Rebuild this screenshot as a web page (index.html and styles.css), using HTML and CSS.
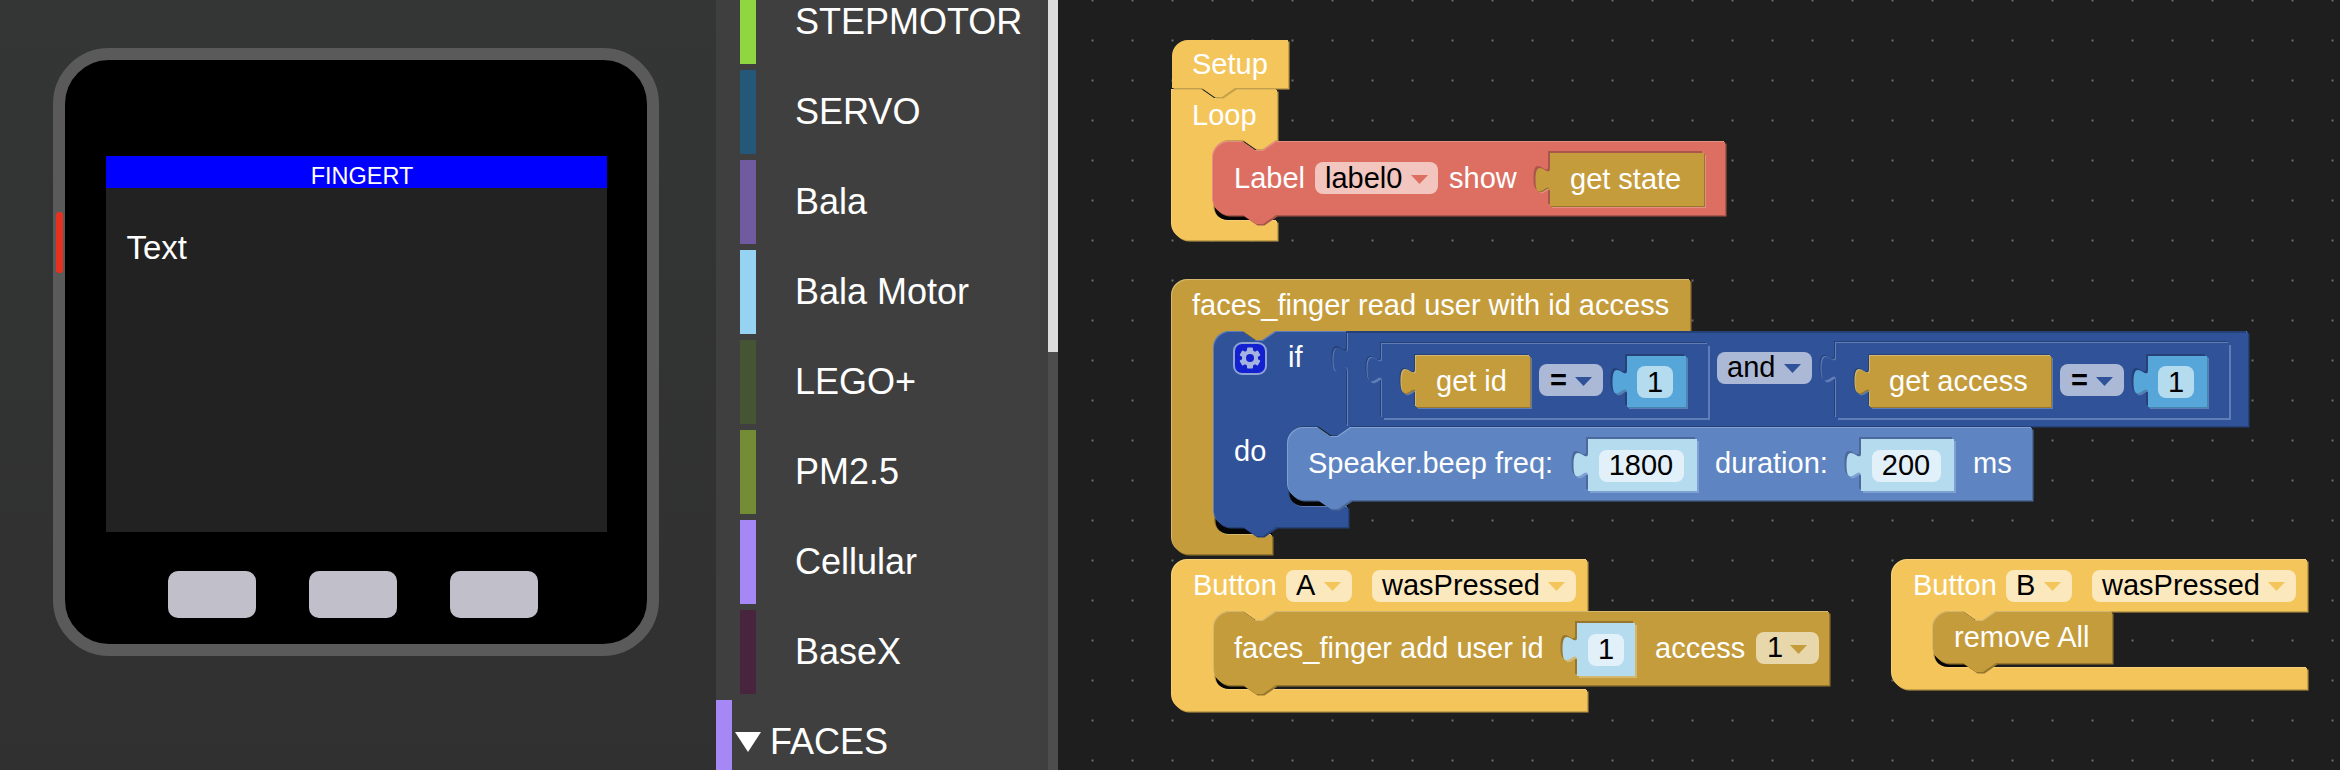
FILE: index.html
```html
<!DOCTYPE html>
<html>
<head>
<meta charset="utf-8">
<title>UIFlow</title>
<link rel="stylesheet" href="styles.css">
</head>
<body>
<div class="app">

  <div class="preview">
    <div class="device">
      <span class="side-led"></span>
      <div class="screen">
        <div class="title-bar">FINGERT</div>
        <div class="screen-text">Text</div>
      </div>
      <div class="buttons">
        <span class="btn"></span>
        <span class="btn"></span>
        <span class="btn"></span>
      </div>
    </div>
  </div>

  <div class="toolbox">
    <div class="cat-list">
      <div class="cat"><span class="swatch sw-step"></span><span class="cat-name">STEPMOTOR</span></div>
      <div class="cat"><span class="swatch sw-servo"></span><span class="cat-name">SERVO</span></div>
      <div class="cat"><span class="swatch sw-bala"></span><span class="cat-name">Bala</span></div>
      <div class="cat"><span class="swatch sw-motor"></span><span class="cat-name">Bala Motor</span></div>
      <div class="cat"><span class="swatch sw-lego"></span><span class="cat-name">LEGO+</span></div>
      <div class="cat"><span class="swatch sw-pm"></span><span class="cat-name">PM2.5</span></div>
      <div class="cat"><span class="swatch sw-cell"></span><span class="cat-name">Cellular</span></div>
      <div class="cat"><span class="swatch sw-base"></span><span class="cat-name">BaseX</span></div>
      <div class="group">
        <span class="swatch sw-faces"></span>
        <span class="caret"></span>
        <span class="group-name">FACES</span>
      </div>
    </div>
    <div class="scroll"><div class="scroll-thumb"></div></div>
  </div>

  <div class="workspace">
    <svg class="blocks" width="1282" height="770" viewBox="1058 0 1282 770">
      <defs>
        <path id="b-setup" d="M1172,56 a16,16 0 0 1 16,-16 H1288 V88 H1235 l-13,9 h-7 l-13,-9 H1172 Z"/>
        <path id="b-loop" d="M1172,90 H1202 l13,9 h7 l13,-9 H1277 V140 H1276 l-13,9 h-7 l-13,-9 H1229 a16,16 0 0 0 -16,16 V205 a16,16 0 0 0 16,16 H1277 V240 H1188 a16,16 0 0 1 -16,-16 Z"/>
        <path id="b-label" d="M1213,158 a16,16 0 0 1 16,-16 H1243 l13,9 h7 l13,-9 H1725 V215 H1276 l-13,9 h-7 l-13,-9 H1229 a16,16 0 0 1 -16,-16 Z"/>
        <path id="b-getstate" d="M1550,153 v12 v3 c0,12 -14.5,-14 -14.5,12 s14.5,-3 14.5,12 V206 H1704 V153 Z"/>
        <path id="b-read" d="M1172,296 a16,16 0 0 1 16,-16 H1690 V331 H1276 l-13,9 h-7 l-13,-9 H1230 a16,16 0 0 0 -16,16 V519 a16,16 0 0 0 16,16 H1272 V554 H1188 a16,16 0 0 1 -16,-16 Z"/>
        <path id="b-if" d="M1214,348 a16,16 0 0 1 16,-16 H1243 l13,9 h7 l13,-9 H2248 V426 H1351 l-13,9 h-7 l-13,-9 H1304 a16,16 0 0 0 -16,16 V491 a16,16 0 0 0 16,16 H1348 V527 H1276 l-13,9 h-7 l-13,-9 H1230 a16,16 0 0 1 -16,-16 Z"/>
        <path id="b-and" d="M1348,333 v12 v3 c0,12 -14.5,-14 -14.5,12 s14.5,-3 14.5,12 V426 H2248 V333 Z"/>
        <path id="b-eq1" d="M1382,344 v11 v3 c0,12 -14.5,-14 -14.5,12 s14.5,-3 14.5,12 V418 H1708 V344 Z"/>
        <path id="b-eq2" d="M1836,343 v11 v3 c0,12 -14.5,-14 -14.5,12 s14.5,-3 14.5,12 V418 H2229 V343 Z"/>
        <path id="b-getid" d="M1416,356 v11 v3 c0,12 -14.5,-14 -14.5,12 s14.5,-3 14.5,12 V407 H1530 V356 Z"/>
        <path id="b-num1" d="M1627,356 v11 v3 c0,12 -14.5,-14 -14.5,12 s14.5,-3 14.5,12 V407 H1686 V356 Z"/>
        <path id="b-getaccess" d="M1870,356 v11 v3 c0,12 -14.5,-14 -14.5,12 s14.5,-3 14.5,12 V407 H2051 V356 Z"/>
        <path id="b-num2" d="M2148,356 v11 v3 c0,12 -14.5,-14 -14.5,12 s14.5,-3 14.5,12 V407 H2207 V356 Z"/>
        <path id="b-speak" d="M1288,444 a16,16 0 0 1 16,-16 H1318 l13,9 h7 l13,-9 H2032 V500 H1351 l-13,9 h-7 l-13,-9 H1304 a16,16 0 0 1 -16,-16 Z"/>
        <path id="b-freq" d="M1588,439 v11 v3 c0,12 -14.5,-14 -14.5,12 s14.5,-3 14.5,12 V491 H1697 V439 Z"/>
        <path id="b-dur" d="M1861,439 v11 v3 c0,12 -14.5,-14 -14.5,12 s14.5,-3 14.5,12 V491 H1954 V439 Z"/>
        <path id="b-btna" d="M1172,576 a16,16 0 0 1 16,-16 H1587 V611 H1276 l-13,9 h-7 l-13,-9 H1230 a16,16 0 0 0 -16,16 V674 a16,16 0 0 0 16,16 H1587 V711 H1188 a16,16 0 0 1 -16,-16 Z"/>
        <path id="b-add" d="M1214,628 a16,16 0 0 1 16,-16 H1243 l13,9 h7 l13,-9 H1829 V685 H1276 l-13,9 h-7 l-13,-9 H1230 a16,16 0 0 1 -16,-16 Z"/>
        <path id="b-uid" d="M1577,623 v11 v3 c0,12 -14.5,-14 -14.5,12 s14.5,-3 14.5,12 V676 H1635 V623 Z"/>
        <path id="b-btnb" d="M1892,576 a16,16 0 0 1 16,-16 H2307 V611 H1996 l-13,9 h-7 l-13,-9 H1949 a16,16 0 0 0 -16,16 V652 a16,16 0 0 0 16,16 H2307 V689 H1908 a16,16 0 0 1 -16,-16 Z"/>
        <path id="b-remove" d="M1933,628 a16,16 0 0 1 16,-16 H1963 l13,9 h7 l13,-9 H2112 V663 H1996 l-13,9 h-7 l-13,-9 H1949 a16,16 0 0 1 -16,-16 Z"/>
      </defs>

      <!-- setup / loop -->
      <rect class="void" x="1213" y="190" width="60" height="32"/>
      <g class="yel">
        <use href="#b-loop" class="hi" x="-1" y="-1"/><use href="#b-loop" class="lo" x="1.5" y="1.5"/><use href="#b-loop" class="fl"/>
        <use href="#b-setup" class="lo" x="1.5" y="1.5"/><use href="#b-setup" class="fl"/>
        <text class="t" x="1192" y="74">Setup</text>
        <text class="t" x="1192" y="125">Loop</text>
      </g>
      <g class="red">
        <use href="#b-label" class="hi" x="-1" y="-1"/><use href="#b-label" class="lo" x="1.5" y="1.5"/><use href="#b-label" class="fl"/>
        <text class="t" x="1234" y="188">Label</text>
        <rect class="dd" x="1315" y="162" width="123" height="32" rx="8"/>
        <text class="k" x="1325" y="188">label0</text>
        <polygon class="arrow" points="1411,175 1428,175 1419.5,184"/>
        <text class="t" x="1449" y="188">show</text>
        <use href="#b-getstate" class="lo" x="-2" y="-2"/><use href="#b-getstate" class="hi" x="2" y="2"/>
        <g class="gold">
          <use href="#b-getstate" class="lo" x="1" y="1"/><use href="#b-getstate" class="fl"/>
          <text class="t" x="1570" y="189">get state</text>
        </g>
      </g>

      <!-- fingerprint read event -->
      <rect class="void" x="1214" y="505" width="58" height="31"/>
      <g class="gold">
        <use href="#b-read" class="hi" x="-1" y="-1"/><use href="#b-read" class="lo" x="1.5" y="1.5"/><use href="#b-read" class="fl"/>
        <text class="t" x="1192" y="315">faces_finger read user with id access</text>
      </g>
      <rect class="void" x="1288" y="480" width="60" height="28"/>
      <g class="navy">
        <use href="#b-if" class="hi" x="-1" y="-1"/><use href="#b-if" class="lo" x="1.5" y="1.5"/><use href="#b-if" class="fl"/>
        <rect class="gear-box" x="1234" y="343" width="32" height="31" rx="8"/>
        <g class="gear">
          <rect x="1247" y="347.5" width="6" height="21" rx="1"/>
          <rect x="1247" y="347.5" width="6" height="21" rx="1" transform="rotate(60 1250 358)"/>
          <rect x="1247" y="347.5" width="6" height="21" rx="1" transform="rotate(120 1250 358)"/>
          <circle cx="1250" cy="358" r="8"/>
        </g>
        <circle class="gear-hole" cx="1250" cy="358" r="4"/>
        <text class="t" x="1288" y="367">if</text>
        <text class="t" x="1234" y="461">do</text>

        <use href="#b-and" class="lo" x="-2" y="-2"/><use href="#b-and" class="hi" x="-1" y="0"/><use href="#b-and" class="fl"/>

        <use href="#b-eq1" class="lo" x="-2" y="-2"/><use href="#b-eq1" class="hi" x="2" y="2"/><use href="#b-eq1" class="hi" x="-1" y="-1"/><use href="#b-eq1" class="fl"/>
        <use href="#b-getid" class="lo" x="-2" y="-2"/><use href="#b-getid" class="hi" x="2" y="2"/>
        <g class="gold">
          <use href="#b-getid" class="hi" x="-1" y="-1"/><use href="#b-getid" class="lo" x="1" y="1"/><use href="#b-getid" class="fl"/>
          <text class="t" x="1436" y="391">get id</text>
        </g>
        <rect class="dd" x="1539" y="364" width="64" height="32" rx="8"/>
        <text class="k bold" x="1550" y="390">=</text>
        <polygon class="arrow" points="1575,377 1592,377 1583.5,386"/>
        <use href="#b-num1" class="lo" x="-2" y="-2"/><use href="#b-num1" class="hi" x="2" y="2"/>
        <g class="sky">
          <use href="#b-num1" class="lo" x="1" y="1"/><use href="#b-num1" class="fl"/>
          <rect class="field" x="1637" y="366" width="36" height="32" rx="8"/>
          <text class="k mid" x="1655" y="392">1</text>
        </g>

        <rect class="dd" x="1717" y="352" width="95" height="32" rx="8"/>
        <text class="k" x="1727" y="377">and</text>
        <polygon class="arrow" points="1784,364 1801,364 1792.5,373"/>

        <use href="#b-eq2" class="lo" x="-2" y="-2"/><use href="#b-eq2" class="hi" x="2" y="2"/><use href="#b-eq2" class="hi" x="-1" y="-1"/><use href="#b-eq2" class="fl"/>
        <use href="#b-getaccess" class="lo" x="-2" y="-2"/><use href="#b-getaccess" class="hi" x="2" y="2"/>
        <g class="gold">
          <use href="#b-getaccess" class="hi" x="-1" y="-1"/><use href="#b-getaccess" class="lo" x="1" y="1"/><use href="#b-getaccess" class="fl"/>
          <text class="t" x="1889" y="391">get access</text>
        </g>
        <rect class="dd" x="2060" y="364" width="64" height="32" rx="8"/>
        <text class="k bold" x="2071" y="390">=</text>
        <polygon class="arrow" points="2096,377 2113,377 2104.5,386"/>
        <use href="#b-num2" class="lo" x="-2" y="-2"/><use href="#b-num2" class="hi" x="2" y="2"/>
        <g class="sky">
          <use href="#b-num2" class="lo" x="1" y="1"/><use href="#b-num2" class="fl"/>
          <rect class="field" x="2158" y="366" width="36" height="32" rx="8"/>
          <text class="k mid" x="2176" y="392">1</text>
        </g>
      </g>
      <g class="blue">
        <use href="#b-speak" class="hi" x="-1" y="-1"/><use href="#b-speak" class="lo" x="1.5" y="1.5"/><use href="#b-speak" class="fl"/>
        <text class="t" x="1308" y="473">Speaker.beep freq:</text>
        <use href="#b-freq" class="lo" x="-2" y="-2"/><use href="#b-freq" class="hi" x="2" y="2"/>
        <g class="ice">
          <use href="#b-freq" class="fl"/>
          <rect class="field" x="1599" y="450" width="85" height="32" rx="8"/>
          <text class="k mid" x="1641" y="475">1800</text>
        </g>
        <text class="t" x="1715" y="473">duration:</text>
        <use href="#b-dur" class="lo" x="-2" y="-2"/><use href="#b-dur" class="hi" x="2" y="2"/>
        <g class="ice">
          <use href="#b-dur" class="fl"/>
          <rect class="field" x="1872" y="450" width="69" height="32" rx="8"/>
          <text class="k mid" x="1906" y="475">200</text>
        </g>
        <text class="t" x="1973" y="473">ms</text>
      </g>

      <!-- button A -->
      <rect class="void" x="1214" y="665" width="60" height="26"/>
      <g class="yel">
        <use href="#b-btna" class="hi" x="-1" y="-1"/><use href="#b-btna" class="lo" x="1.5" y="1.5"/><use href="#b-btna" class="fl"/>
        <text class="t" x="1193" y="595">Button</text>
        <rect class="dd" x="1286" y="570" width="66" height="32" rx="8"/>
        <text class="k" x="1296" y="595">A</text>
        <polygon class="arrow" points="1324,582 1341,582 1332.5,591"/>
        <rect class="dd" x="1372" y="570" width="204" height="32" rx="8"/>
        <text class="k" x="1382" y="595">wasPressed</text>
        <polygon class="arrow" points="1548,582 1565,582 1556.5,591"/>
      </g>
      <g class="gold">
        <use href="#b-add" class="hi" x="-1" y="-1"/><use href="#b-add" class="lo" x="1.5" y="1.5"/><use href="#b-add" class="fl"/>
        <text class="t" x="1234" y="658">faces_finger add user id</text>
        <use href="#b-uid" class="lo" x="-2" y="-2"/><use href="#b-uid" class="hi" x="2" y="2"/>
        <g class="ice">
          <use href="#b-uid" class="fl"/>
          <rect class="field" x="1588" y="634" width="36" height="32" rx="8"/>
          <text class="k mid" x="1606" y="659">1</text>
        </g>
        <text class="t" x="1655" y="658">access</text>
        <rect class="dd" x="1756" y="632" width="63" height="32" rx="8"/>
        <text class="k" x="1767" y="657">1</text>
        <polygon class="arrow" points="1790,645 1807,645 1798.5,654"/>
      </g>

      <!-- button B -->
      <rect class="void" x="1933" y="640" width="60" height="29"/>
      <g class="yel">
        <use href="#b-btnb" class="hi" x="-1" y="-1"/><use href="#b-btnb" class="lo" x="1.5" y="1.5"/><use href="#b-btnb" class="fl"/>
        <text class="t" x="1913" y="595">Button</text>
        <rect class="dd" x="2006" y="570" width="66" height="32" rx="8"/>
        <text class="k" x="2016" y="595">B</text>
        <polygon class="arrow" points="2044,582 2061,582 2052.5,591"/>
        <rect class="dd" x="2092" y="570" width="204" height="32" rx="8"/>
        <text class="k" x="2102" y="595">wasPressed</text>
        <polygon class="arrow" points="2268,582 2285,582 2276.5,591"/>
      </g>
      <g class="gold">
        <use href="#b-remove" class="hi" x="-1" y="-1"/><use href="#b-remove" class="lo" x="1.5" y="1.5"/><use href="#b-remove" class="fl"/>
        <text class="t" x="1954" y="647">remove All</text>
      </g>
    </svg>
  </div>

</div>
</body>
</html>
```

FILE: styles.css
```css
html, body { margin:0; padding:0; }
body { background-color:#1e1e1e; font-family:"Liberation Sans", Arial, sans-serif; color:#fff; }
.app { display:flex; width:2340px; height:770px; overflow:hidden; }

/* device preview */
.preview { width:716px; flex:none; box-sizing:border-box; padding:48px 0 0 53px; background:linear-gradient(#343635, #2f302f); }
.device { position:relative; box-sizing:border-box; width:606px; height:608px; padding-top:96px; background:#000; border:12px solid #5a5a5a; border-radius:56px; }
.side-led { position:absolute; left:-9px; top:152px; width:7px; height:61px; border-radius:3px; background:#e8301f; }
.screen { width:501px; height:376px; margin:0 auto; background:#222; }
.title-bar { box-sizing:border-box; height:32px; padding:8px 0 0 12px; line-height:24px; text-align:center; font-size:23.5px; background:#0000ff; }
.screen-text { padding:41px 0 0 21px; font-size:33px; line-height:38px; }
.buttons { display:flex; justify-content:center; gap:53px; margin-top:39px; padding-right:6px; }
.btn { width:88px; height:47px; border-radius:10px; background:#c0bfca; }

/* block categories */
.toolbox { position:relative; width:342px; flex:none; background:#3f3f3f; overflow:hidden; }
.cat-list { margin-top:-20px; }
.cat { display:flex; align-items:center; height:84px; margin:0 0 6px 24px; }
.swatch { flex:none; display:block; width:16px; height:84px; }
.cat-name { margin-left:39px; font-size:36px; line-height:84px; height:84px; }
.group { display:flex; align-items:center; height:84px; }
.caret { width:0; height:0; margin-left:3px; border-left:13px solid transparent; border-right:13px solid transparent; border-top:20px solid #fff; }
.group-name { margin-left:9px; font-size:36px; line-height:84px; height:84px; }
.sw-step { background:#8fd640; }
.sw-servo { background:#245878; }
.sw-bala { background:#705aa0; }
.sw-motor { background:#96d3f3; }
.sw-lego { background:#455432; }
.sw-pm { background:#748c36; }
.sw-cell { background:#a587f5; }
.sw-base { background:#48243f; }
.sw-faces { background:#a587f5; }
.scroll { position:absolute; top:0; right:0; bottom:0; width:10px; background:#4d4d4d; }
.scroll-thumb { height:352px; background:#dcdcdc; }

/* workspace, dots are the blockly grid */
.workspace { flex:1; background-color:#1e1e1e; background-image:radial-gradient(circle, #6a6a6a 1px, transparent 1.4px); background-size:40px 40px; background-position:14.5px -19.5px; }
.blocks { display:block; }
.blocks text { font-family:"Liberation Sans", Arial, sans-serif; font-size:29px; }
.t { fill:#fff; }
.k { fill:#000; }
.bold { font-weight:bold; }
.mid { text-anchor:middle; }
.void { fill:#050505; }
.fl { fill:var(--fl); }
.hi { fill:var(--hi); }
.lo { fill:var(--lo); }
.dd { fill:var(--dd); }
.arrow { fill:var(--fl); }
.field { fill:var(--field); }
.yel { --fl:#f4c55b; --hi:#f6cf78; --lo:#c4a049; --dd:#fbe8bd; }
.red { --fl:#dc6f62; --hi:#e78e83; --lo:#ab564c; --dd:#f3c5bf; }
.gold { --fl:#c49c3b; --hi:#d4b86f; --lo:#96772d; --dd:#e7d7ab; }
.navy { --fl:#305298; --hi:#5f7eb7; --lo:#264178; --dd:#acb9d6; }
.blue { --fl:#5e85c2; --hi:#7fa0d3; --lo:#4b6a9b; --dd:#bfcee7; }
.sky { --fl:#57a6da; --hi:#79bae5; --lo:#4585ae; --field:#b5dbef; }
.ice { --fl:#b5dbef; --field:#e2f0fa; }
.gear-box { fill:#1220d0; stroke:#8ea2d4; stroke-width:2; }
.gear rect, .gear circle { fill:#a5b3e0; }
.gear-hole { fill:#1220d0; }
```
